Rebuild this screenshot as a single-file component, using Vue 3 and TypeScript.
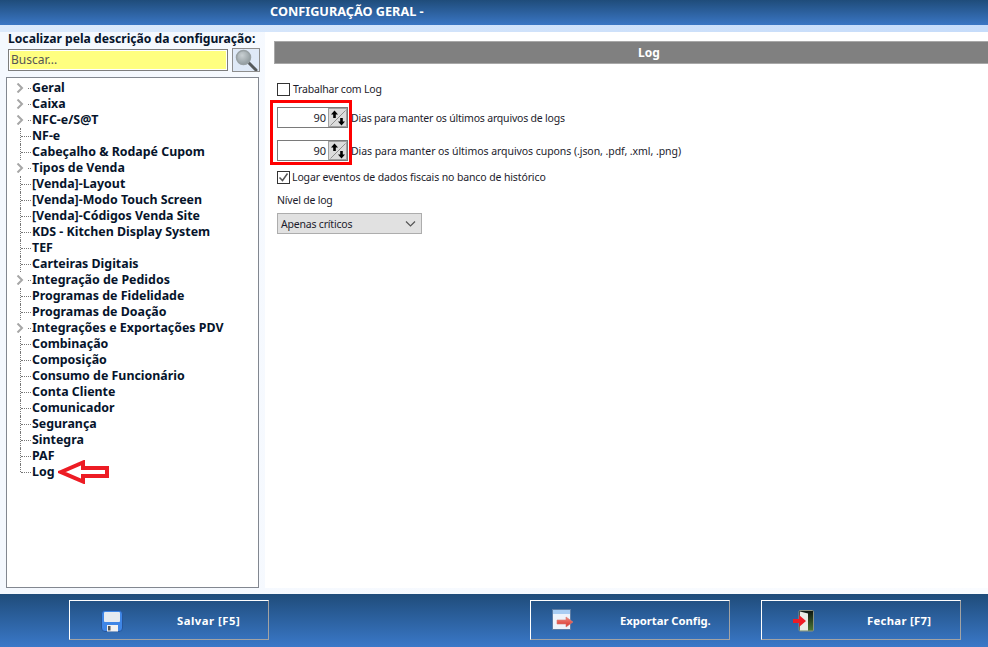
<script setup lang="ts">
interface TreeItem { label: string; expandable?: boolean }
const items: TreeItem[] = [
  { label: 'Geral', expandable: true },
  { label: 'Caixa', expandable: true },
  { label: 'NFC-e/S@T', expandable: true },
  { label: 'NF-e' },
  { label: 'Cabeçalho & Rodapé Cupom' },
  { label: 'Tipos de Venda', expandable: true },
  { label: '[Venda]-Layout' },
  { label: '[Venda]-Modo Touch Screen' },
  { label: '[Venda]-Códigos Venda Site' },
  { label: 'KDS - Kitchen Display System' },
  { label: 'TEF' },
  { label: 'Carteiras Digitais' },
  { label: 'Integração de Pedidos', expandable: true },
  { label: 'Programas de Fidelidade' },
  { label: 'Programas de Doação' },
  { label: 'Integrações e Exportações PDV', expandable: true },
  { label: 'Combinação' },
  { label: 'Composição' },
  { label: 'Consumo de Funcionário' },
  { label: 'Conta Cliente' },
  { label: 'Comunicador' },
  { label: 'Segurança' },
  { label: 'Sintegra' },
  { label: 'PAF' },
  { label: 'Log' },
]
const spins = [
  { value: '90', label: 'Dias para manter os últimos arquivos de logs', wide: false },
  { value: '90', label: 'Dias para manter os últimos arquivos cupons (.json, .pdf, .xml, .png)', wide: true },
]
</script>

<template>
  <div class="app">
    <header class="top"><span class="title">CONFIGURAÇÃO GERAL -</span></header>
    <div class="strip"></div>
    <main class="main">
      <aside class="side">
        <div class="find-label">Localizar pela descrição da configuração:</div>
        <div class="find-row">
          <div class="find-input">Buscar...</div>
          <button class="find-btn" type="button">
            <svg width="24" height="22" viewBox="0 0 24 22">
              <defs>
                <radialGradient id="lens" cx="40%" cy="35%" r="70%">
                  <stop offset="0" stop-color="#c9d0d3" />
                  <stop offset="1" stop-color="#8e989c" />
                </radialGradient>
              </defs>
              <path d="M14 13l8 8" stroke="#55595b" stroke-width="3" stroke-linecap="round" />
              <circle cx="9.500" cy="8.500" r="7" fill="url(#lens)" stroke="#99a1a4" stroke-width="1.500" />
            </svg>
          </button>
        </div>
        <div class="tree">
          <div
            v-for="(item, i) in items"
            :key="item.label"
            class="node"
            :class="{ last: i === items.length - 1, lead: i < 3 }"
          >
            <span class="guide"></span>
            <span class="dash"></span>
            <span v-if="item.expandable" class="chev">
              <svg width="8" height="10" viewBox="0 0 8 10">
                <path d="M1.500 .500l4.500 4.500-4.500 4.500" fill="none" stroke="#a6a6a6" stroke-width="2" />
              </svg>
            </span>
            <span class="node-label">{{ item.label }}</span>
          </div>
          <svg class="arrow" width="52" height="24" viewBox="0 0 52 24">
            <path d="M3 12L25 2.500V8h24v8H25v5.500z" fill="#fff" stroke="#ed1c24" stroke-width="4" />
          </svg>
        </div>
      </aside>
      <section class="panel">
        <div class="panel-head">Log</div>
        <div class="form">
          <label class="check-row first"><span class="check"></span>Trabalhar com Log</label>
          <div class="spins">
            <div v-for="s in spins" :key="s.label" class="spin-row">
              <div class="spin">
                <span class="spin-val">{{ s.value }}</span>
                <span class="spin-btn">
                  <svg width="16" height="16" viewBox="0 0 16 16">
                    <path d="M15.500 .500L.500 15.500" stroke="#8f8f8f" stroke-width="1" />
                    <path d="M4.500 .500L1 4.500h2.200V8h2.600V4.500H8z" fill="#000" />
                    <path d="M11.500 15.500L8 11.500h2.200V8h2.600v3.500H15z" fill="#000" />
                  </svg>
                </span>
              </div>
              <span class="spin-label" :class="{ wide: s.wide }">{{ s.label }}</span>
            </div>
            <div class="redbox"></div>
          </div>
          <label class="check-row second">
            <span class="check">
              <svg width="13" height="13" viewBox="0 0 13 13"><path d="M2.500 6.500l3 3 5-7" fill="none" stroke="#555" stroke-width="1.500" /></svg>
            </span>Logar eventos de dados fiscais no banco de histórico
          </label>
          <div class="level-label">Nível de log</div>
          <div class="select">
            <span>Apenas críticos</span>
            <svg width="11" height="6" viewBox="0 0 11 6"><path d="M1 .5l4.500 4.500L10 .5" fill="none" stroke="#555" stroke-width="1.200" /></svg>
          </div>
        </div>
      </section>
    </main>
    <footer class="foot">
      <button class="fbtn save" type="button">
        <svg class="ico" width="22" height="22" viewBox="0 0 22 22">
          <rect x="0.500" y="0.500" width="21" height="21" rx="3.500" fill="#3f86e6" stroke="#27569a" />
          <rect x="3" y="2" width="16" height="10" rx="1" fill="#e6eaf0" />
          <rect x="6" y="15" width="11" height="6.500" fill="#f2f2f2" />
          <rect x="7" y="16" width="2.500" height="4.500" fill="#555" />
        </svg>
        <span>Salvar [F5]</span>
      </button>
      <button class="fbtn export" type="button">
        <svg class="ico" width="22" height="22" viewBox="0 0 22 22">
          <defs>
            <linearGradient id="exportArrow" x1="0" y1="0" x2="0" y2="1">
              <stop offset="0" stop-color="#f08a80" />
              <stop offset="1" stop-color="#d8302a" />
            </linearGradient>
          </defs>
          <rect x="0.500" y="0.500" width="18" height="20" fill="#eef3fb" stroke="#5d7da5" />
          <rect x="1" y="1" width="17" height="4" fill="#a9cdf3" />
          <path d="M5 11h9V8l7 5-7 5v-3H5z" fill="url(#exportArrow)" stroke="#d97a70" stroke-width=".6" />
        </svg>
        <span>Exportar Config.</span>
      </button>
      <button class="fbtn close" type="button">
        <svg class="ico" width="22" height="22" viewBox="0 0 22 22">
          <defs>
            <linearGradient id="doorBack" x1="0" y1="0" x2="0" y2="1">
              <stop offset="0" stop-color="#0d1410" />
              <stop offset="1" stop-color="#4d7a34" />
            </linearGradient>
          </defs>
          <rect x="6" y="0.500" width="14.500" height="20.500" rx="1" fill="url(#doorBack)" stroke="#8b9384" />
          <path d="M7 1.500L15 3.500V20.500H7z" fill="#e9ece6" />
          <path d="M0 9h6V5l7 6-7 6v-4H0z" fill="#ee1c25" />
        </svg>
        <span>Fechar [F7]</span>
      </button>
    </footer>
  </div>
</template>

<style>
html, body { margin: 0; overflow: hidden; }
</style>

<style scoped>
.app {
  width: 988px;
  height: 647px;
  display: flex;
  flex-direction: column;
  overflow: hidden;
  font-family: "Noto Sans", sans-serif;
  font-size: 10.5px;
  letter-spacing: -0.2px;
  color: #000;
  background: linear-gradient(90deg, #f4f8fe, #fafcff);
}
.top {
  height: 25px;
  flex: none;
  background: linear-gradient(180deg, #1f4c7a, #3a76c4);
  color: #fff;
  font-weight: 700;
  font-size: 12.700px;
  letter-spacing: 0;
  line-height: 23px;
  padding-left: 270px;
  box-sizing: border-box;
}
.strip { height: 7px; flex: none; background: linear-gradient(90deg, #dbe9fb, #c6dcfa); }
.main { flex: 1; display: flex; min-height: 0; }
.side { width: 265px; flex: none; padding-left: 6px; box-sizing: border-box; }
.find-label { font-weight: 700; font-size: 12.150px; letter-spacing: 0; line-height: 14px; margin-left: 2px; color: #06142b; }
.find-row { display: flex; margin: 3px 0 0 2px; gap: 4px; }
.find-input {
  width: 220px;
  height: 22px;
  box-sizing: border-box;
  border: 1px solid #7d7d7d;
  outline: 1px solid #fff;
  outline-offset: -2px;
  background: #ffff80;
  padding-left: 2px;
  line-height: 20px;
  font-size: 12px;
  letter-spacing: 0;
  color: #555;
}
.find-btn {
  width: 28px;
  height: 24px;
  margin-top: -1px;
  padding: 0;
  box-sizing: border-box;
  border: 1px solid #8e8e8e;
  background: #dfe9f7;
  display: flex;
  align-items: center;
  justify-content: center;
}
.tree {
  position: relative;
  width: 253px;
  height: 511px;
  margin-top: 5px;
  border: 1px solid #828790;
  box-sizing: border-box;
  background: #fff;
  padding-top: 2px;
}
.node {
  position: relative;
  height: 16px;
  padding-left: 25px;
  line-height: 16px;
  font-weight: 700;
  font-size: 12.400px;
  letter-spacing: 0;
  color: #06142b;
}
.guide { position: absolute; left: 13px; top: 0; bottom: 0; border-left: 1px dotted #777; }
.node.lead .guide { display: none; }
.node.last .guide { bottom: 8px; }
.dash { position: absolute; left: 14px; top: 8px; width: 10px; border-top: 1px dotted #777; }
.chev {
  position: absolute;
  left: 9px;
  top: 0;
  width: 11px;
  height: 16px;
  background: #fff;
  display: flex;
  align-items: center;
}
.arrow { position: absolute; left: 51px; top: 382px; }
.panel { flex: 1; min-width: 0; overflow: hidden; background: #fff; margin-bottom: 6px; padding-left: 9px; display: flex; flex-direction: column; }
.panel-head {
  width: 750px;
  height: 23px;
  margin-top: 9px;
  flex: none;
  background: #808080;
  border: 1px solid #a8a8a8;
  box-sizing: border-box;
  color: #fff;
  font-weight: 700;
  font-size: 12px;
  letter-spacing: 0;
  line-height: 21px;
  text-align: center;
}
.form { padding-left: 3px; color: #1c1c2c; }
.check-row { display: flex; align-items: center; gap: 3px; height: 14px; }
.check-row.first { margin-top: 18px; }
.check-row.second { margin-top: 9px; gap: 2px; letter-spacing: -0.12px; }
.check {
  width: 13px;
  height: 13px;
  box-sizing: border-box;
  border: 1px solid #333;
  background: #fff;
  display: flex;
  align-items: center;
  justify-content: center;
}
.check svg { flex: none; margin: -1px; }
.spins { position: relative; display: flex; flex-direction: column; gap: 12px; margin-top: 11px; }
.spin-row { display: flex; align-items: center; gap: 3px; height: 21px; }
.spin-label.wide { letter-spacing: -0.06px; }
.spin {
  width: 71px;
  height: 21px;
  box-sizing: border-box;
  border: 1px solid #7a7a7a;
  display: flex;
  align-items: center;
  justify-content: flex-end;
}
.spin-val { padding-right: 2px; font-size: 11px; letter-spacing: 0; }
.spin-btn { width: 19px; height: 19px; background: #dcdcdc; border: 1px solid #a0a0a0; box-sizing: border-box; display: flex; align-items: center; justify-content: center; overflow: hidden; }
.redbox {
  position: absolute;
  left: -7px;
  top: -7px;
  width: 82px;
  height: 65px;
  box-sizing: border-box;
  border: 3px solid #f00;
  pointer-events: none;
}
.level-label { margin-top: 9px; line-height: 14px; }
.select {
  width: 145px;
  height: 21px;
  margin-top: 6px;
  box-sizing: border-box;
  background: #e1e1e1;
  border: 1px solid #adadad;
  display: flex;
  align-items: center;
  justify-content: space-between;
  padding: 0 5px 0 3px;
}
.foot {
  height: 53px;
  flex: none;
  position: relative;
  background: linear-gradient(180deg, #1f4c7a, #3a78c8);
  display: flex;
  align-items: flex-start;
  padding: 6px 27px 0 69px;
  box-sizing: border-box;
}
.fbtn {
  position: relative;
  width: 200px;
  height: 40px;
  box-sizing: border-box;
  background: transparent;
  border-style: solid;
  border-width: 1px;
  border-color: #fff #a3a3a3 #a3a3a3 #fff;
  color: #fff;
  font: 700 11.300px "Noto Sans", sans-serif;
  padding: 0;
  display: block;
  text-align: left;
}
.fbtn span { position: absolute; top: 12px; white-space: nowrap; }
.ico { position: absolute; top: 9px; left: 31px; }
.save span { left: 107px; letter-spacing: .5px; }
.export { margin-left: 261px; }
.export .ico { left: 21px; top: 8px; }
.export span { left: 89px; letter-spacing: -.05px; }
.close { margin-left: 31px; }
.close span { left: 105px; letter-spacing: .3px; }
</style>
